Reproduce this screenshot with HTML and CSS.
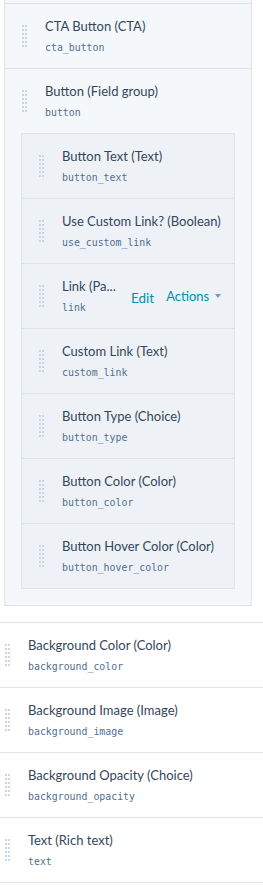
FILE: index.html
```html
<!DOCTYPE html>
<html lang="en">
<head>
  <meta charset="UTF-8">
  <title>Module fields</title>
  <link rel="stylesheet" href="styles.css">
</head>
<body>
  <div class="field-list">
    <div class="group-wrap">
      <div class="group-box">
        <div class="row-tail"></div>

        <div class="field">
          <span class="handle"></span>
          <div class="field-info">
            <div class="field-label">CTA Button (CTA)</div>
            <div class="field-name">cta_button</div>
          </div>
        </div>

        <div class="field field-group">
          <div class="field-head">
            <span class="handle"></span>
            <div class="field-info">
              <div class="field-label">Button (Field group)</div>
              <div class="field-name">button</div>
            </div>
          </div>

          <div class="group-box nested">
            <div class="field">
              <span class="handle"></span>
              <div class="field-info">
                <div class="field-label">Button Text (Text)</div>
                <div class="field-name">button_text</div>
              </div>
            </div>
            <div class="field">
              <span class="handle"></span>
              <div class="field-info">
                <div class="field-label">Use Custom Link? (Boolean)</div>
                <div class="field-name">use_custom_link</div>
              </div>
            </div>
            <div class="field hovered">
              <span class="handle"></span>
              <div class="field-info short">
                <div class="field-label">Link (Pa...</div>
                <div class="field-name">link</div>
              </div>
              <div class="field-actions">
                <a class="edit">Edit</a>
                <a class="actions">Actions <span class="caret"></span></a>
              </div>
            </div>
            <div class="field">
              <span class="handle"></span>
              <div class="field-info">
                <div class="field-label">Custom Link (Text)</div>
                <div class="field-name">custom_link</div>
              </div>
            </div>
            <div class="field">
              <span class="handle"></span>
              <div class="field-info">
                <div class="field-label">Button Type (Choice)</div>
                <div class="field-name">button_type</div>
              </div>
            </div>
            <div class="field">
              <span class="handle"></span>
              <div class="field-info">
                <div class="field-label">Button Color (Color)</div>
                <div class="field-name">button_color</div>
              </div>
            </div>
            <div class="field">
              <span class="handle"></span>
              <div class="field-info">
                <div class="field-label">Button Hover Color (Color)</div>
                <div class="field-name">button_hover_color</div>
              </div>
            </div>
          </div>
        </div>
      </div>
    </div>

    <div class="field top">
      <span class="handle"></span>
      <div class="field-info">
        <div class="field-label">Background Color (Color)</div>
        <div class="field-name">background_color</div>
      </div>
    </div>
    <div class="field top">
      <span class="handle"></span>
      <div class="field-info">
        <div class="field-label">Background Image (Image)</div>
        <div class="field-name">background_image</div>
      </div>
    </div>
    <div class="field top">
      <span class="handle"></span>
      <div class="field-info">
        <div class="field-label">Background Opacity (Choice)</div>
        <div class="field-name">background_opacity</div>
      </div>
    </div>
    <div class="field top">
      <span class="handle"></span>
      <div class="field-info">
        <div class="field-label">Text (Rich text)</div>
        <div class="field-name">text</div>
      </div>
    </div>
  </div>
</body>
</html>
```

FILE: styles.css
```css
body {
  margin: 0;
  background: #fff;
  font-family: Lato, "Open Sans", sans-serif;
  color: #33475b;
}
.field-list {
  width: 263px;
  border-bottom: 1px solid #dfe3eb;
}
.group-wrap {
  padding: 0 11px 16px 4px;
}
.group-box {
  background: #f5f8fa;
  border: 1px solid #dfe3eb;
  border-top: none;
}
.row-tail {
  height: 3px;
  border-bottom: 1px solid #dfe3eb;
}
.group-box.nested {
  background: #eef2f6;
  border-top: 1px solid #dfe3eb;
  margin: 0 16px 16px 16px;
}
.field {
  display: flex;
  align-items: flex-start;
  height: 64px;
  padding-left: 17px;
  border-bottom: 1px solid #dfe3eb;
}
.field:last-child {
  border-bottom: none;
}
.field-group {
  display: block;
  height: auto;
  padding-left: 0;
}
.field-head {
  display: flex;
  align-items: flex-start;
  height: 64px;
  padding-left: 17px;
}
.field.top {
  padding-left: 5px;
  border-bottom: none;
  border-top: 1px solid #dfe3eb;
}
.handle {
  display: flex;
  gap: 1px;
  width: 5px;
  height: 22px;
  margin-top: 21px;
  margin-right: 18px;
  flex-shrink: 0;
}
.handle::before,
.handle::after {
  content: "";
  width: 2px;
  height: 22px;
  background: linear-gradient(#cbd6e2 2px, transparent 2px) 0 0 / 2px 4px;
}
.field-info {
  padding-top: 13px;
  min-width: 0;
}
.field-info.short {
  width: 56px;
}
.field-label {
  font-size: 13px;
  line-height: 18px;
  white-space: nowrap;
}
.field-name {
  margin-top: 6px;
  font-family: "DejaVu Sans Mono", monospace;
  font-size: 9.9px;
  line-height: 14px;
  color: #516f90;
}
.field-actions {
  display: flex;
  align-items: flex-start;
  margin-left: 13px;
  padding-top: 24px;
  color: #0091ae;
}
.edit {
  margin-top: 2px;
  margin-right: 12px;
  font-size: 13.5px;
}
.actions {
  display: flex;
  align-items: center;
  font-size: 13px;
}
.caret {
  display: inline-block;
  margin-left: 6px;
  border-left: 3.5px solid transparent;
  border-right: 3.5px solid transparent;
  border-top: 4px solid #7c98b6;
}
```
